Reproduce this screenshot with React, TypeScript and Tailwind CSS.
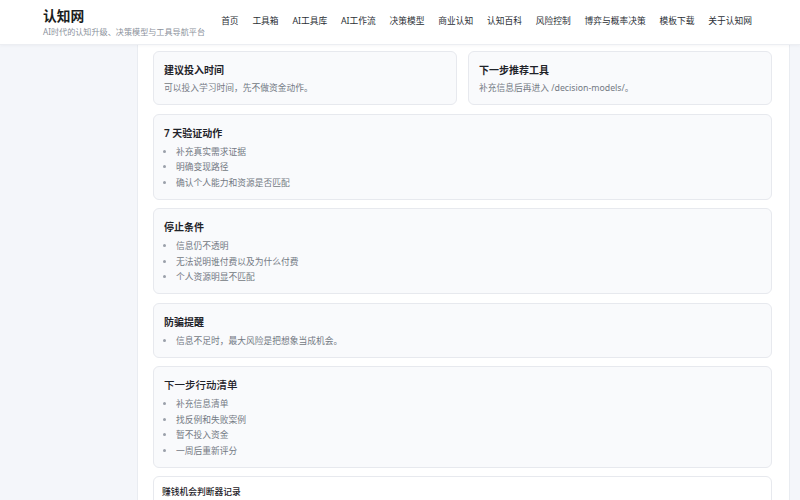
import React from "react";

const nav = [
  "首页",
  "工具箱",
  "AI工具库",
  "AI工作流",
  "决策模型",
  "商业认知",
  "认知百科",
  "风险控制",
  "博弈与概率决策",
  "模板下载",
  "关于认知网",
];

const sections = [
  {
    title: "7 天验证动作",
    items: ["补充真实需求证据", "明确变现路径", "确认个人能力和资源是否匹配"],
  },
  {
    title: "停止条件",
    items: ["信息仍不透明", "无法说明谁付费以及为什么付费", "个人资源明显不匹配"],
  },
  {
    title: "防骗提醒",
    items: ["信息不足时，最大风险是把想象当成机会。"],
  },
  {
    title: "下一步行动清单",
    items: ["补充信息清单", "找反例和失败案例", "暂不投入资金", "一周后重新评分"],
    plain: true,
  },
];

function Card({ children }: { children: React.ReactNode }) {
  return (
    <div className="rounded-[6px] border border-[#e7e9ee] bg-[#f9fafc] px-[10px] pt-[10px] pb-[7.5px]">
      {children}
    </div>
  );
}

export default function App() {
  return (
    <div
      className="flex h-[500px] w-[800px] flex-col overflow-hidden bg-white text-[#1f2329]"
      style={{ fontFamily: '"Noto Sans", "Noto Sans CJK SC", sans-serif' }}
    >
      {/* Header */}
      <header className="relative z-10 flex h-[45px] shrink-0 items-center justify-between border-b border-[#eceef2] bg-white pl-[43px] pr-[48px] shadow-[0_1px_3px_rgba(15,23,42,0.04)]">
        <div>
          <div className="text-[13.75px] font-bold leading-[17px] text-[#1a1d21]">认知网</div>
          <div className="mt-[1.5px] text-[8.125px] leading-[11px] text-[#8c929c]">
            AI时代的认知升级、决策模型与工具导航平台
          </div>
        </div>
        <nav className="flex gap-[13.75px] text-[8.75px] text-[#2b2f36]">
          {nav.map((n) => (
            <span key={n}>{n}</span>
          ))}
        </nav>
      </header>

      <div className="flex min-h-0 flex-1">
        {/* left rail */}
        <aside className="w-[138px] shrink-0 border-r border-[#e9ecf1] bg-[#f4f6fa]" />

        {/* main column */}
        <main className="flex w-[651px] shrink-0 flex-col gap-[8.5px] bg-white pt-[6px] pl-[15px] pr-[17px]">
          <div className="grid grid-cols-2 gap-[11px]">
            <Card>
              <h3 className="text-[10px] font-semibold leading-[17px]">建议投入时间</h3>
              <p className="mt-[2px] text-[8.75px] leading-[15.5px] text-[#737983]">
                可以投入学习时间，先不做资金动作。
              </p>
            </Card>
            <Card>
              <h3 className="text-[10px] font-semibold leading-[17px]">下一步推荐工具</h3>
              <p className="mt-[2px] text-[8.75px] leading-[15.5px] text-[#737983]">
                补充信息后再进入 /decision-models/。
              </p>
            </Card>
          </div>

          {sections.map((s) => (
            <Card key={s.title}>
              <h3
                className={
                  s.plain
                    ? "text-[10.5px] font-medium leading-[17px]"
                    : "text-[10px] font-semibold leading-[17px]"
                }
              >
                {s.title}
              </h3>
              <ul className="mt-[3px] list-disc pl-[12px] text-[8.75px] leading-[15.5px] text-[#737983] marker:text-[#9aa0aa]">
                {s.items.map((it) => (
                  <li key={it}>{it}</li>
                ))}
              </ul>
            </Card>
          ))}

          <div className="rounded-[6px] border border-[#e7e9ee] bg-white px-[8px] pt-[7px] pb-[9px]">
            <h3 className="text-[8.75px] font-medium leading-[17px]">赚钱机会判断器记录</h3>
          </div>
        </main>

        {/* right rail */}
        <aside className="flex-1 border-l border-[#e9ecf1] bg-[#f4f6fa]" />
      </div>
    </div>
  );
}
